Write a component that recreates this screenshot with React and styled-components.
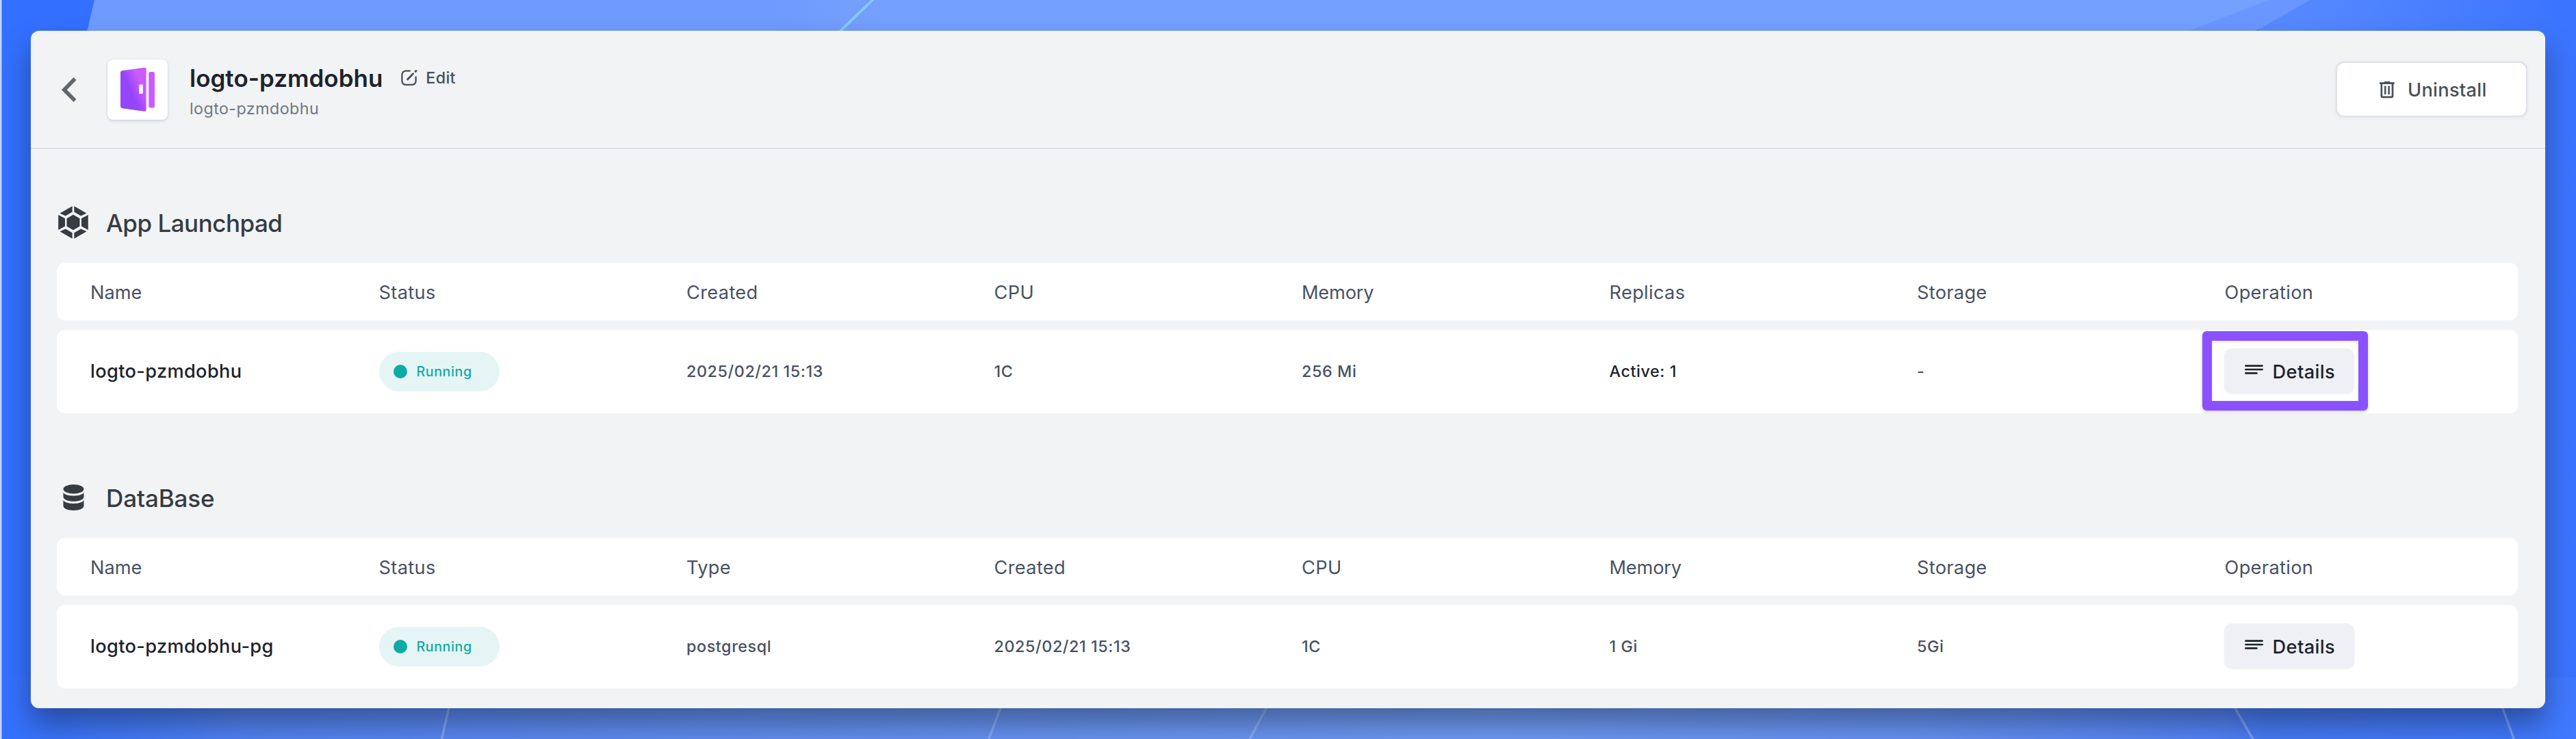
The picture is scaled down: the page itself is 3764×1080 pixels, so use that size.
import React from "react";
import styled, { createGlobalStyle } from "styled-components";

const GlobalStyle = createGlobalStyle`
  * { box-sizing: border-box; }
  body {
    margin: 0;
    background: #3370ff;
    font-family: Inter, "Liberation Sans", sans-serif;
    color: #1d232b;
  }
`;

const Desktop = styled.div`
  position: relative;
  width: 3764px;
  height: 1080px;
  padding: 45px;
  overflow: hidden;
`;

const WallpaperSvg = styled.svg`
  position: absolute;
  inset: 0;
`;

const Window = styled.main`
  position: relative;
  display: flex;
  flex-direction: column;
  width: 3674px;
  height: 990px;
  border-radius: 12px;
  background: #f2f3f5;
  box-shadow: 0 24px 42px rgba(0, 0, 0, 0.35);
`;

const Header = styled.header`
  display: flex;
  align-items: center;
  height: 173px;
  padding: 0 26px 0 45px;
  border-bottom: 2px solid #dfe1e5;
`;

const BackButton = styled.button`
  display: flex;
  padding: 0;
  border: 0;
  background: none;
`;

const AppTile = styled.div`
  display: flex;
  align-items: center;
  justify-content: center;
  width: 88px;
  height: 88px;
  margin: 0 32px 0 45px;
  border-radius: 8px;
  background: #fff;
  box-shadow: 0 2px 4px rgba(19, 51, 107, 0.14), 0 0 2px rgba(19, 51, 107, 0.14);
`;

const TitleBlock = styled.div`
  flex: 1;
  padding-top: 11px;
`;

const TitleLine = styled.div`
  display: flex;
  align-items: center;
  height: 44px;
`;

const AppName = styled.h1`
  margin: 0;
  font-size: 35px;
  font-weight: 600;
  line-height: 44px;
`;

const EditButton = styled.button`
  display: flex;
  align-items: center;
  gap: 12px;
  margin-left: 27px;
  padding: 0;
  border: 0;
  background: none;
  color: #485058;
  font: 500 23.3px/42px Inter, sans-serif;
  letter-spacing: 0.3px;
`;

const AppId = styled.div`
  color: #6f7984;
  font-size: 23.3px;
  line-height: 45px;
  letter-spacing: 0.42px;
`;

const UninstallButton = styled.button`
  display: flex;
  align-items: center;
  gap: 19px;
  width: 280px;
  height: 81px;
  padding: 2px 0 0 62px;
  border: 2px solid #dfe2ea;
  border-radius: 12px;
  background: #fff;
  box-shadow: 0 1px 4px rgba(19, 51, 107, 0.08);
  color: #485058;
  font: 500 27.2px/42px Inter, sans-serif;
  letter-spacing: 0.3px;
`;

const Body = styled.div`
  display: flex;
  flex-direction: column;
  gap: 99px;
  padding: 83px 40px 0 38px;
`;

const SectionTitle = styled.div`
  display: flex;
  align-items: center;
  gap: 24px;
  height: 48px;
  margin-bottom: 35px;
`;

const SectionIcon = styled.span`
  display: flex;
  justify-content: center;
  width: 48px;
`;

const SectionName = styled.h2`
  margin: 0;
  padding-top: 1px;
  color: #363c42;
  font-size: 35px;
  font-weight: 500;
  line-height: 44px;
  letter-spacing: ${(p) => p.$tracking}px;
`;

const Table = styled.div`
  display: flex;
  flex-direction: column;
  gap: 14px;
`;

const Row = styled.div`
  display: grid;
  grid-template-columns: repeat(8, 1fr);
  align-items: center;
  height: ${(p) => (p.$head ? 84 : 122)}px;
  border-radius: 12px;
  background: #fff;
`;

const Cell = styled.div`
  display: flex;
  padding-left: 21px;
  color: #485264;
  font-size: 23.3px;
  font-weight: 450;
  line-height: 32px;
  letter-spacing: 0.6px;
  &:first-child { padding-left: 49px; }
`;

const HeadCell = styled(Cell)`
  padding-top: 3px;
  font-size: 27.2px;
  font-weight: 400;
  line-height: 36px;
  letter-spacing: ${(p) => p.$tracking}px;
`;

const NameCell = styled(Cell)`
  color: #1d232b;
  font-size: 27.2px;
  font-weight: 500;
  letter-spacing: 0.35px;
`;

const StrongCell = styled(Cell)`
  color: #1d232b;
  font-weight: 500;
`;

const Badge = styled.span`
  display: flex;
  align-items: center;
  gap: 14px;
  width: 176px;
  height: 58px;
  margin-bottom: 1px;
  padding: 0 0 0 21px;
  border-radius: 29px;
  background: #e5f5f5;
  color: #0daaa8;
  font-size: 19.6px;
  font-weight: 500;
  letter-spacing: 0.6px;
  &::before {
    content: "";
    width: 20px;
    height: 20px;
    border-radius: 50%;
    background: #0daaa8;
  }
`;

const DetailsWrap = styled.span`
  position: relative;
  margin: 0 0 2px -1px;
`;

const DetailsButton = styled.button`
  display: flex;
  align-items: center;
  gap: 14px;
  width: 190px;
  height: 66px;
  padding: 3px 0 0 30px;
  border: 0;
  border-radius: 12px;
  background: #eff0f5;
  box-shadow: 0 1px 3px rgba(19, 51, 107, 0.08);
  color: #1d232b;
  font: 500 27.2px/36px Inter, sans-serif;
  letter-spacing: 0.4px;
  svg { margin-bottom: 7px; }
`;

const Highlight = styled.span`
  position: absolute;
  inset: -25px -20px -25px -32px;
  border: 14px solid #8b51ff;
  border-radius: 6px;
  box-shadow: 0 2px 4px rgba(0, 0, 0, 0.2), inset 0 1px 4px rgba(0, 0, 0, 0.14);
`;

const Wallpaper = () => (
  <WallpaperSvg width="3764" height="1080" viewBox="0 0 3764 1080">
    <defs>
      <linearGradient id="top" x1="0" x2="3764" gradientUnits="userSpaceOnUse">
        <stop offset="0.035" stopColor="#6f9bff" />
        <stop offset="0.3" stopColor="#6f9bff" />
        <stop offset="0.34" stopColor="#74a0ff" />
        <stop offset="0.85" stopColor="#74a0ff" />
      </linearGradient>
      <linearGradient id="right" x1="3300" x2="3764" gradientUnits="userSpaceOnUse">
        <stop offset="0" stopColor="#588bff" />
        <stop offset="0.5" stopColor="#4b80ff" />
        <stop offset="1" stopColor="#3a73ff" />
      </linearGradient>
      <linearGradient id="bottom" x1="0" x2="3764" gradientUnits="userSpaceOnUse">
        <stop offset="0" stopColor="#3370ff" />
        <stop offset="0.015" stopColor="#3873fb" />
        <stop offset="0.1" stopColor="#5383f2" />
        <stop offset="0.3" stopColor="#638ff0" />
        <stop offset="0.58" stopColor="#6f9af4" />
        <stop offset="0.75" stopColor="#6792f3" />
        <stop offset="0.86" stopColor="#5383f5" />
        <stop offset="0.88" stopColor="#477bf4" />
        <stop offset="1" stopColor="#4079ff" />
      </linearGradient>
    </defs>
    <rect width="3764" height="1080" fill="#3370ff" />
    <rect x="3300" width="464" height="1080" fill="url(#right)" />
    <path d="M138 0H3375L3270 60H124Z" fill="url(#top)" />
    <path d="M3315 0H3375L3270 60H3160Z" fill="#6997ff" />
    <path d="M1279 -4L1221 52" stroke="#86cdec" strokeWidth="3.5" />
    <rect y="990" width="3764" height="90" fill="url(#bottom)" />
    <g stroke="#a8c4ff" strokeOpacity="0.5" strokeWidth="3.5" fill="none">
      <path d="M657 1030L645 1082" />
      <path d="M1464 1030L1444 1082" />
      <path d="M1853 1030L1825 1082" />
      <path d="M3263 1030L3293 1082" />
      <path d="M3655 1030L3674 1082" />
    </g>
    <rect width="2.5" height="1080" fill="#c3d5ff" />
  </WallpaperSvg>
);

const BackIcon = () => (
  <svg width="22" height="38" viewBox="0 0 22 38">
    <path d="M19.5 3L3.8 19.3L19.5 35" fill="none" stroke="#60676c" strokeWidth="5.6" />
  </svg>
);

const DoorLogo = () => (
  <svg width="50" height="66" viewBox="0 0 50 66">
    <defs>
      <linearGradient id="door" x1="14" y1="37" x2="32" y2="29" gradientUnits="userSpaceOnUse">
        <stop offset="0.1" stopColor="#9546fc" />
        <stop offset="1" stopColor="#c95bff" />
      </linearGradient>
    </defs>
    <path d="M2.5 5.2L35 .8Q37.7 .5 37.7 3V62.5Q37.7 65 35 64.7L2.5 60.2Q0 59.8 0 57.5V8Q0 5.6 2.5 5.2Z" fill="url(#door)" />
    <rect x="27.2" y="25.5" width="5.6" height="13.5" rx="1.2" fill="#fff" />
    <rect x="41.3" y="7" width="8.7" height="52.5" rx="2.5" fill="#c95bff" />
  </svg>
);

const EditIcon = () => (
  <svg width="24" height="24" viewBox="0 0 24 24" fill="none" stroke="#485058" strokeLinecap="round">
    <path d="M13 1.6H7A5.5 5.5 0 0 0 1.4 7.1V16.4A5.5 5.5 0 0 0 7 21.9H16A5.5 5.5 0 0 0 21.6 16.4V10.3" strokeWidth="2.3" />
    <path d="M9.6 14L17.6 5.8" strokeWidth="2.9" />
    <path d="M21.2 2.4L22 1.6" strokeWidth="3" />
  </svg>
);

const TrashIcon = () => (
  <svg width="22" height="25" viewBox="0 0 22 25" fill="none" stroke="#485058">
    <path d="M0 2.6H21.6" strokeWidth="2.8" />
    <path d="M7 .9H15" strokeWidth="1.8" />
    <path d="M2.8 3V21.3Q2.8 22.8 4.3 22.8H17.5Q19 22.8 19 21.3V3" strokeWidth="2.7" />
    <path d="M8.2 6.5V19M13.6 6.5V19" strokeWidth="2.5" />
  </svg>
);

const LaunchpadIcon = () => (
  <svg width="44" height="48" viewBox="0 0 44 48" fill="#363c42">
    <path d="M20.6 .2V8.7L10.8 14.6L2.5 10.7Z" />
    <path d="M23.4 .2V8.7L33.2 14.6L41.5 10.7Z" />
    <path d="M20.6 47.8V39.3L10.8 33.4L2.5 37.3Z" />
    <path d="M23.4 47.8V39.3L33.2 33.4L41.5 37.3Z" />
    <path d="M.2 13L10 18.3V29.7L.2 35Z" />
    <path d="M43.8 13L34 18.3V29.7L43.8 35Z" />
    <path d="M22 12.8L31.5 18.3V29.7L22 35.2L12.5 29.7V18.3Z" />
  </svg>
);

const DatabaseIcon = () => (
  <svg width="31" height="38" viewBox="0 0 30 38" fill="#363c42">
    <ellipse cx="15" cy="6.8" rx="15" ry="6.8" />
    <path d="M0 11.7C4 18.2 26 18.2 30 11.7V18C30 27 0 27 0 18Z" />
    <path d="M0 23C4 29.6 26 29.6 30 23V31C30 40.3 0 40.3 0 31Z" />
  </svg>
);

const LinesIcon = () => (
  <svg width="27" height="16" viewBox="0 0 27 16" stroke="#1d232b" strokeWidth="2.7" strokeLinecap="round">
    <path d="M1.4 2.6H25.6M1.4 8H25.6M1.4 13.4H17.4" />
  </svg>
);

const headTracking = { Name: 0, Memory: -0.2, Storage: 0.3 };

const sections = [
  {
    name: "App Launchpad",
    tracking: -0.5,
    icon: <LaunchpadIcon />,
    head: ["Name", "Status", "Created", "CPU", "Memory", "Replicas", "Storage", "Operation"],
    app: "logto-pzmdobhu",
    cells: ["2025/02/21 15:13", "1C", "256 Mi", "Active: 1", "-"],
    strong: 3,
    highlighted: true,
  },
  {
    name: "DataBase",
    tracking: -0.1,
    icon: <DatabaseIcon />,
    head: ["Name", "Status", "Type", "Created", "CPU", "Memory", "Storage", "Operation"],
    app: "logto-pzmdobhu-pg",
    cells: ["postgresql", "2025/02/21 15:13", "1C", "1 Gi", "5Gi"],
  },
];

const Section = ({ name, tracking, icon, head, app, cells, strong, highlighted }) => (
  <section>
    <SectionTitle>
      <SectionIcon>{icon}</SectionIcon>
      <SectionName $tracking={tracking}>{name}</SectionName>
    </SectionTitle>
    <Table>
      <Row $head>
        {head.map((h) => (
          <HeadCell key={h} $tracking={headTracking[h] ?? 0.34}>{h}</HeadCell>
        ))}
      </Row>
      <Row>
        <NameCell>{app}</NameCell>
        <Cell><Badge>Running</Badge></Cell>
        {cells.map((c, i) =>
          i === strong ? <StrongCell key={i}>{c}</StrongCell> : <Cell key={i}>{c}</Cell>
        )}
        <Cell>
          <DetailsWrap>
            <DetailsButton><LinesIcon />Details</DetailsButton>
            {highlighted && <Highlight />}
          </DetailsWrap>
        </Cell>
      </Row>
    </Table>
  </section>
);

export default function App() {
  return (
    <Desktop>
      <GlobalStyle />
      <Wallpaper />
      <Window>
        <Header>
          <BackButton aria-label="Back"><BackIcon /></BackButton>
          <AppTile><DoorLogo /></AppTile>
          <TitleBlock>
            <TitleLine>
              <AppName>logto-pzmdobhu</AppName>
              <EditButton><EditIcon />Edit</EditButton>
            </TitleLine>
            <AppId>logto-pzmdobhu</AppId>
          </TitleBlock>
          <UninstallButton><TrashIcon />Uninstall</UninstallButton>
        </Header>
        <Body>
          {sections.map((s) => <Section key={s.name} {...s} />)}
        </Body>
      </Window>
    </Desktop>
  );
}
